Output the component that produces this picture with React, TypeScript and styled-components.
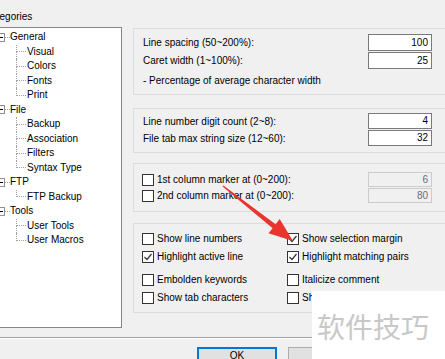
import React from 'react';
import styled, { createGlobalStyle } from 'styled-components';

const Global = createGlobalStyle`
  html, body { margin: 0; padding: 0; background: #f0f0f0; }
  body { font-family: "Liberation Sans", Arial, sans-serif; font-size: 10px; color: #000; }
  * { box-sizing: border-box; }
`;

const Dialog = styled.div`
  position: relative;
  width: 445px;
  height: 359px;
  overflow: hidden;
  background: #f0f0f0;
  padding-top: 10px;
`;

const Main = styled.div`
  display: flex;
  align-items: flex-start;
`;

const LeftCol = styled.div`
  flex: none;
  margin-left: -20px;
  width: 142px;
  display: flex;
  flex-direction: column;
`;

const CatLabel = styled.div`
  height: 13px;
  line-height: 13px;
  padding-left: 4px;
  margin-bottom: 4px;
  white-space: nowrap;
`;

const Tree = styled.div`
  height: 301px;
  background: #fff;
  border: 1px solid #828790;
  padding-top: 2px;
`;

const TreeRow = styled.div<{ $indent: number }>`
  display: flex;
  align-items: stretch;
  height: 14.5px;
  line-height: 14.5px;
  padding-left: ${p => p.$indent}px;
  white-space: nowrap;
`;

const ExpandBox = styled.span`
  flex: none;
  align-self: center;
  width: 9px;
  height: 9px;
  border: 1px solid #919191;
  background: #fff;
  display: flex;
  align-items: center;
  justify-content: center;
`;

const Minus = styled.span`
  width: 5px;
  height: 1px;
  background: #000;
`;

const RootLine = styled.span`
  flex: none;
  align-self: center;
  width: 5px;
  height: 0;
  border-top: 1px dotted #a0a0a0;
`;

const Connector = styled.span<{ $last: boolean }>`
  flex: none;
  width: 10px;
  margin-right: 1px;
  display: flex;
  flex-direction: column;
  &::before {
    content: "";
    flex: 1;
    border-left: 1px dotted #a0a0a0;
    border-bottom: 1px dotted #a0a0a0;
  }
  &::after {
    content: "";
    flex: 1;
    border-left: ${p => (p.$last ? '1px solid transparent' : '1px dotted #a0a0a0')};
  }
`;

const TreeText = styled.span`
  padding-left: 0;
`;

const RightCol = styled.div`
  flex: none;
  margin-left: 11px;
  width: 327px;
  display: flex;
  flex-direction: column;
`;

const Group = styled.div<{ $mt: number; $pt: number; $pb: number; $pl: number }>`
  margin-top: ${p => p.$mt}px;
  border: 1px solid #dcdcdc;
  padding: ${p => p.$pt}px 27px ${p => p.$pb}px ${p => p.$pl}px;
  display: flex;
  flex-direction: column;
`;

const FieldRow = styled.div<{ $h: number; $mt?: number }>`
  display: flex;
  align-items: center;
  justify-content: space-between;
  height: ${p => p.$h}px;
  margin-top: ${p => p.$mt ?? 0}px;
  white-space: nowrap;
`;

const NumBox = styled.div<{ $disabled?: boolean; $h: number }>`
  flex: none;
  width: 64px;
  height: ${p => p.$h}px;
  line-height: ${p => p.$h - 2}px;
  border: 1px solid ${p => (p.$disabled ? '#cccccc' : '#7a7a7a')};
  background: ${p => (p.$disabled ? '#f0f0f0' : '#ffffff')};
  color: ${p => (p.$disabled ? '#6d6d6d' : '#000')};
  text-align: right;
  padding-right: 3px;
`;

const CheckLabel = styled.label`
  display: flex;
  align-items: center;
  gap: 3px;
  white-space: nowrap;
`;

const Box = styled.span`
  flex: none;
  width: 12px;
  height: 12px;
  border: 1px solid #333;
  background: #fff;
  display: flex;
  align-items: center;
  justify-content: center;
`;

const CheckGrid = styled.div<{ $mt: number }>`
  display: grid;
  grid-template-columns: 145px 1fr;
  grid-auto-rows: 17px;
  row-gap: 1px;
  margin-top: ${p => p.$mt}px;
`;

const Separator = styled.div`
  margin-top: 9px;
  height: 2px;
  border-top: 1px solid #a0a0a0;
  border-bottom: 1px solid #ffffff;
`;

const ButtonRow = styled.div`
  margin-top: 8px;
  display: flex;
  gap: 11px;
  padding-left: 197px;
`;

const Button = styled.div<{ $primary?: boolean }>`
  flex: none;
  width: 80px;
  height: 23px;
  background: #e1e1e1;
  border: 1px solid ${p => (p.$primary ? '#0078d7' : '#adadad')};
  box-shadow: ${p => (p.$primary ? 'inset 0 0 0 1px #0078d7' : 'none')};
  text-align: center;
  padding-top: 1px;
  line-height: 13px;
`;

const Watermark = styled.div`
  position: absolute;
  left: 312px;
  top: 291px;
  right: 0;
  bottom: 0;
  background: #fff;
  padding: 21px 0 0 5px;
  font-family: "Noto Sans CJK SC", sans-serif;
  font-size: 28px;
  line-height: 28px;
  color: #c8c8c8;
  white-space: nowrap;
`;

const ArrowLayer = styled.svg`
  position: absolute;
  left: 0;
  top: 0;
  pointer-events: none;
`;

const tree = [
  { label: 'General', children: ['Visual', 'Colors', 'Fonts', 'Print'] },
  { label: 'File', children: ['Backup', 'Association', 'Filters', 'Syntax Type'] },
  { label: 'FTP', children: ['FTP Backup'] },
  { label: 'Tools', children: ['User Tools', 'User Macros'] },
];

const Check = ({ checked, label }: { checked: boolean; label: string }) => (
  <CheckLabel>
    <Box>
      {checked && (
        <svg width="10" height="10" viewBox="0 0 10 10">
          <polyline points="1.5,5 4,7.5 8.5,2" fill="none" stroke="#333" strokeWidth="1.2" />
        </svg>
      )}
    </Box>
    <span>{label}</span>
  </CheckLabel>
);

export default function App() {
  return (
    <>
      <Global />
      <Dialog>
        <Main>
          <LeftCol>
            <CatLabel>Categories</CatLabel>
            <Tree>
              {tree.map(node => (
                <React.Fragment key={node.label}>
                  <TreeRow $indent={15}>
                    <ExpandBox>
                      <Minus />
                    </ExpandBox>
                    <RootLine />
                    <TreeText>{node.label}</TreeText>
                  </TreeRow>
                  {node.children.map((c, i) => (
                    <TreeRow key={c} $indent={35}>
                      <Connector $last={i === node.children.length - 1} />
                      <TreeText>{c}</TreeText>
                    </TreeRow>
                  ))}
                </React.Fragment>
              ))}
            </Tree>
          </LeftCol>
          <RightCol>
            <Group $mt={18} $pt={5} $pb={5} $pl={9}>
              <FieldRow $h={17}>
                <span>Line spacing (50~200%):</span>
                <NumBox $h={17}>100</NumBox>
              </FieldRow>
              <FieldRow $h={17} $mt={1}>
                <span>Caret width (1~100%):</span>
                <NumBox $h={17}>25</NumBox>
              </FieldRow>
              <FieldRow $h={17} $mt={3}>
                <span>- Percentage of average character width</span>
              </FieldRow>
            </Group>
            <Group $mt={13} $pt={4} $pb={6} $pl={9}>
              <FieldRow $h={16}>
                <span>Line number digit count (2~8):</span>
                <NumBox $h={16}>4</NumBox>
              </FieldRow>
              <FieldRow $h={16} $mt={1}>
                <span>File tab max string size (12~60):</span>
                <NumBox $h={16}>32</NumBox>
              </FieldRow>
            </Group>
            <Group $mt={10} $pt={8} $pb={8} $pl={8}>
              <FieldRow $h={15}>
                <Check checked={false} label="1st column marker at (0~200):" />
                <NumBox $h={15} $disabled>6</NumBox>
              </FieldRow>
              <FieldRow $h={15} $mt={1}>
                <Check checked={false} label="2nd column marker at (0~200):" />
                <NumBox $h={15} $disabled>80</NumBox>
              </FieldRow>
            </Group>
            <Group $mt={11} $pt={6} $pb={6} $pl={8}>
              <CheckGrid $mt={0}>
                <Check checked={false} label="Show line numbers" />
                <Check checked label="Show selection margin" />
                <Check checked label="Highlight active line" />
                <Check checked label="Highlight matching pairs" />
              </CheckGrid>
              <CheckGrid $mt={6}>
                <Check checked={false} label="Embolden keywords" />
                <Check checked={false} label="Italicize comment" />
                <Check checked={false} label="Show tab characters" />
                <Check checked={false} label="Show space characters" />
              </CheckGrid>
            </Group>
          </RightCol>
        </Main>
        <Separator />
        <ButtonRow>
          <Button $primary>OK</Button>
          <Button>Cancel</Button>
        </ButtonRow>
        <ArrowLayer width="445" height="359" viewBox="0 0 445 359">
          <polygon
            points="223.4,185.5 275.6,224.2 279.7,219.1 293,241 268.5,233.3 272.6,228.2 222.6,186.5"
            fill="#e8352e"
          />
        </ArrowLayer>
        <Watermark>软件技巧</Watermark>
      </Dialog>
    </>
  );
}
